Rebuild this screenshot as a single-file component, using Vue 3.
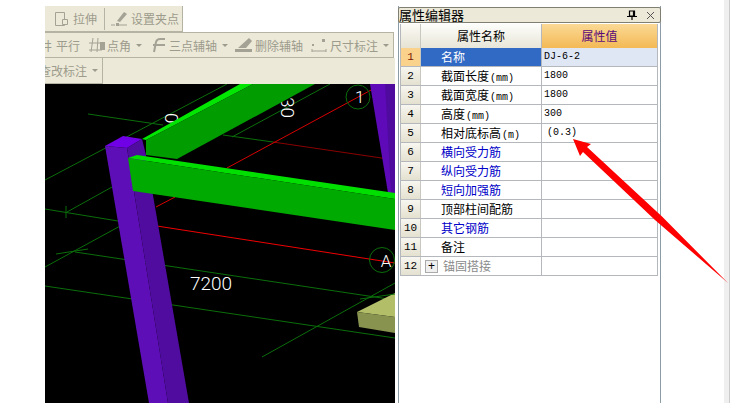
<template>
  <div class="page">
    <div class="work">
      <div class="bars">
        <div class="bar bar1">
          <div class="tool t-stretch">
            <svg width="16" height="16" viewBox="0 0 16 16"><path d="M1.5 1.5h9v13h-9z" fill="none" stroke="#a3a294"/><path d="M8.5 8.5h5v5h-5z" fill="#ece9d8" stroke="#a3a294"/></svg>
            <span>拉伸</span>
          </div>
          <div class="tool sep">
            <svg width="18" height="16" viewBox="0 0 18 16"><path d="M7 10l7-9 3 2-7 8z" fill="#a3a294"/><path d="M1 14h4M8 14h9" stroke="#a3a294"/><path d="M6 12h3v3H6z" fill="#a3a294"/></svg>
            <span>设置夹点</span>
          </div>
        </div>
        <div class="bar bar2">
          <div class="cut"><span>井</span></div>
          <span class="t-par">平行</span>
          <div class="tool g1">
            <svg width="19" height="16" viewBox="0 0 19 16"><path d="M5 1L3 15M10 1L9 15M1 6h13M1 13h13" stroke="#a3a294" fill="none"/><path d="M12 5h5v8h-5z" fill="#a3a294"/></svg>
            <span>点角</span><i class="caret"></i>
          </div>
          <div class="tool g2">
            <svg width="16" height="16" viewBox="0 0 16 16"><path d="M4 15l2-10q1-3 4-3h5M3 8h12" stroke="#a3a294" stroke-width="2" fill="none"/></svg>
            <span>三点辅轴</span><i class="caret"></i>
          </div>
          <div class="tool g3">
            <svg width="18" height="16" viewBox="0 0 18 16"><path d="M3 11l11-10 3 3-6 7z" fill="#a3a294"/><path d="M0 12h17v3H0z" fill="#a3a294"/></svg>
            <span>删除辅轴</span>
          </div>
          <div class="tool g4">
            <svg width="16" height="16" viewBox="0 0 16 16"><path d="M1 12v3M15 12v3M1 14h14" stroke="#a3a294" fill="none"/><path d="M1 7h2v2H1zM11 2h3v3h-3z" fill="#a3a294"/></svg>
            <span>尺寸标注</span><i class="caret"></i>
          </div>
        </div>
        <div class="bar3-wrap">
          <div class="bar bar3">
            <span class="cut3">查改标注</span><i class="caret"></i>
          </div>
        </div>
      </div>
      <div class="canvas">
        <svg width="350" height="319" viewBox="45 84 350 319">
          <rect x="45" y="84" width="350" height="319" fill="#000" />
          <g stroke-width="1" fill="none">
            <line v-for="(l, i) in greens" :key="i" :x1="l[0]" :y1="l[1]" :x2="l[2]" :y2="l[3]" stroke="#0b6e0b" />
            <line x1="273" y1="142" x2="395" y2="160" stroke="#8a0000" />
            <line x1="373" y1="89" x2="227" y2="168" stroke="#d80000" />
            <line x1="175" y1="197" x2="156" y2="207" stroke="#d80000" />
            <line x1="144" y1="224" x2="395" y2="263" stroke="#f00000" />
            <circle cx="358" cy="97" r="12" stroke="#0b6e0b" />
            <circle cx="382" cy="260" r="12.5" stroke="#0b6e0b" />
          </g>
          <text x="355" y="103" class="cad small">1</text>
          <text x="386" y="267" class="cad small" text-anchor="middle">A</text>
          <text x="190" y="290" class="cad big">7200</text>
          <text transform="translate(281 97) rotate(90)" class="cad big">30</text>
          <text transform="translate(165 113) rotate(90)" class="cad big">0</text>

          <polygon points="370,84 395,84 395,193 388,193" fill="#5f0ab8" />
          <polygon points="385,84 395,84 395,193 391,193" fill="#4f0a9e" />

          <polygon points="105,146 123,136 142,139 127,148" fill="#7000e6" />
          <polygon points="105,146 127,148 168,403 149,403" fill="#5e0eb6" />
          <polygon points="127,148 142,139 146,155 189,403 168,403" fill="#500c9f" />

          <polygon points="142,139 240,84 253,84 146,140" fill="#00e600" />
          <polygon points="146,140 253,84 315,84 177,159 146,155" fill="#009c00" />

          <polygon points="128,158 137,155 395,193 395,199" fill="#00e000" />
          <polygon points="128,158 395,199 395,230 133,191" fill="#00aa00" />

          <polygon points="357,312 395,293 395,317" fill="#b2be68" />
          <polygon points="357,312 395,317 395,333 359,327" fill="#88934f" />
          <line x1="360" y1="299" x2="395" y2="294" stroke="#0b6e0b" />
        </svg>
      </div>
    </div>

    <div class="panel">
      <div class="title">
        <span class="title-text">属性编辑器</span>
        <svg width="10" height="10" viewBox="0 0 10 10" class="pin"><path d="M2.5 1h5v5h-5zM0 6.5h10M5 6.5V10M6.5 1v5" fill="none" stroke="#000" stroke-width="1.2"/></svg>
        <svg width="9" height="9" viewBox="0 0 9 9" class="close"><path d="M1 1l7 7M8 1l-7 7" stroke="#555" fill="none"/></svg>
      </div>
      <div class="grid">
        <div class="row head">
          <div class="no"></div>
          <div class="name">属性名称</div>
          <div class="val">属性值</div>
        </div>
        <div v-for="r in rows" :key="r.no" class="row" :class="{ on: r.no === 1 }">
          <div class="no">{{ r.no }}</div>
          <div class="name" :class="{ blue: r.blue, gray: r.plus }">
            <span v-if="r.plus" class="plus">+</span>
            <span>{{ r.name }}</span><span v-if="r.unit" class="unit">{{ r.unit }}</span>
          </div>
          <div class="val" :class="{ shift: r.no === 5 }">{{ r.value }}</div>
        </div>
      </div>
    </div>

    <div class="strip"></div>

    <svg class="arrow" width="754" height="403" viewBox="0 0 754 403">
      <polygon points="573,139 591,144 587,147 662,216.5 728,283 655,220 583,152 580,156" fill="#ff0000" />
    </svg>
  </div>
</template>

<script setup>
const greens = [
  [45, 180, 227, 84],
  [88, 114, 163, 125],
  [223, 135, 273, 142],
  [232, 137, 330, 84],
  [45, 209, 118, 221],
  [66, 206, 66, 218],
  [67, 212, 112, 187],
  [45, 267, 122, 225],
  [56, 254, 88, 249],
  [75, 252, 395, 300],
  [45, 286, 395, 338],
  [262, 357, 395, 283],
]

const rows = [
  { no: 1, name: '名称', value: 'DJ-6-2' },
  { no: 2, name: '截面长度', unit: '(mm)', value: '1800' },
  { no: 3, name: '截面宽度', unit: '(mm)', value: '1800' },
  { no: 4, name: '高度', unit: '(mm)', value: '300' },
  { no: 5, name: '相对底标高', unit: '(m)', value: '(0.3)' },
  { no: 6, name: '横向受力筋', blue: true },
  { no: 7, name: '纵向受力筋', blue: true },
  { no: 8, name: '短向加强筋', blue: true },
  { no: 9, name: '顶部柱间配筋' },
  { no: 10, name: '其它钢筋', blue: true },
  { no: 11, name: '备注' },
  { no: 12, name: '锚固搭接', plus: true },
]
</script>

<style>
html,
body {
  margin: 0;
  background: #fff;
  overflow: hidden;
}
</style>

<style scoped>
.page {
  position: relative;
  width: 754px;
  height: 403px;
  display: flex;
  padding: 6px 0 0 45px;
  box-sizing: border-box;
  overflow: hidden;
  font-family: "Noto Sans CJK SC", sans-serif;
  font-size: 12px;
}
.work {
  width: 350px;
  flex: none;
}
.bars {
  height: 78px;
  color: #9c9b8c;
  overflow: hidden;
  white-space: nowrap;
}
.bar {
  display: flex;
  align-items: center;
  background: #ece9d8;
  box-sizing: border-box;
  border-right: 1px solid #b5b3a3;
  border-bottom: 1px solid #b5b3a3;
}
.bar1 {
  width: 138px;
  height: 26px;
  padding-left: 9px;
}
.bar2 {
  width: 349px;
  height: 26px;
  border-top: 1px solid #b5b3a3;
}
.bar3-wrap {
  background: #ece9d8;
  height: 26px;
}
.bar3 {
  width: 58px;
  height: 26px;
  overflow: hidden;
}
.tool {
  display: flex;
  align-items: center;
  flex: none;
  gap: 3px;
}
.sep {
  margin-left: 7px;
  height: 22px;
  padding-left: 5px;
  border-left: 1px solid #b5b3a3;
}
.cut {
  width: 7px;
  flex: none;
  overflow: hidden;
}
.cut span {
  display: block;
  margin-left: -5px;
}
.t-par {
  flex: none;
  margin-left: 4px;
}
.g1 {
  margin-left: 8px;
  gap: 0;
}
.g2 {
  margin-left: 8px;
}
.g3 {
  margin-left: 7px;
  gap: 2px;
}
.g4 {
  margin-left: 8px;
}
.cut3 {
  flex: none;
  margin-left: -6px;
}
.caret {
  width: 0;
  height: 0;
  margin-left: 5px;
  border: 3px solid transparent;
  border-top-color: #9c9b8c;
  border-bottom-width: 0;
}
.g2 .caret,
.g4 .caret {
  margin-left: 2px;
}
.canvas {
  height: 319px;
}
.canvas svg {
  display: block;
}
.cad {
  fill: #fff;
  font-family: Roboto, "Liberation Sans", sans-serif;
  font-weight: 300;
}
.small {
  font-size: 17px;
}
.big {
  font-size: 19px;
}
.panel {
  width: 263px;
  margin-left: 3px;
  height: 500px;
  flex: none;
  box-sizing: border-box;
  border-right: 1px solid #8b9ca6;
  border-left: 1px solid #8b9ca6;
}
.title {
  display: flex;
  align-items: center;
  height: 16px;
  margin: 1px -1px 0 -1px;
  box-sizing: border-box;
  background: #ece9d8;
  border: 1px solid #7f7f72;
  border-radius: 2px;
}
.title-text {
  font-size: 13px;
  line-height: 14px;
  color: #000;
  flex: 1;
}
.pin {
  margin-right: 9px;
}
.close {
  margin-right: 5px;
}
.grid {
  margin: 1px 0 0 1px;
  width: 258px;
  box-sizing: border-box;
  border-right: 1px solid #b4b8bc;
  border-left: 1px solid #b4b8bc;
}
.row {
  display: flex;
  height: 19px;
  box-sizing: border-box;
  border-bottom: 1px solid #b4b8bc;
  line-height: 18px;
  color: #000;
}
.row.head {
  height: 24px;
  line-height: 23px;
  border-bottom: none;
}
.no {
  width: 20px;
  flex: none;
  text-align: center;
  font-family: "Liberation Mono", monospace;
  font-size: 11px;
  background: linear-gradient(#f7f6f0, #e4e1d0);
  border-right: 1px solid #c8c8c0;
  box-sizing: border-box;
}
.name {
  width: 121px;
  flex: none;
  padding-left: 20px;
  box-sizing: border-box;
  border-right: 1px solid #b4b8bc;
  white-space: nowrap;
}
.val {
  flex: 1;
  padding-left: 2px;
  font-family: "Liberation Mono", monospace;
  font-size: 10px;
}
.head .no {
  background: linear-gradient(#fbfaf5, #e6e3d3);
}
.head .name {
  padding: 0;
  text-align: center;
  background: linear-gradient(#fdfdfb, #e8e6d8);
}
.head .val {
  padding: 0;
  text-align: center;
  font-family: "Noto Sans CJK SC", sans-serif;
  font-size: 12px;
  color: #5a0a78;
  background: linear-gradient(#fbd995, #f3b955);
}
.on .no {
  color: #7a1a00;
  background: #fbd28c;
}
.on .name {
  color: #fff;
  background: #316ac5;
}
.on .val {
  background: #dfe7f5;
}
.blue {
  color: #0000c8;
}
.gray {
  color: #8a8a8a;
  padding-left: 3px;
}
.unit {
  font-family: "Liberation Mono", monospace;
  font-size: 10px;
  margin-left: 1px;
}
.shift {
  padding-left: 5px;
}
.plus {
  display: inline-block;
  width: 11px;
  height: 11px;
  line-height: 10px;
  margin: 0 5px 0 1px;
  text-align: center;
  color: #000;
  font-family: "Liberation Sans", sans-serif;
  font-size: 12px;
  background: #efefef;
  border: 1px solid #aaa;
  vertical-align: 1px;
}
.strip {
  position: absolute;
  left: 724px;
  top: 0;
  width: 6px;
  height: 403px;
  box-sizing: border-box;
  background: #efefef;
  border-right: 1px solid #ccc;
}
.arrow {
  position: absolute;
  left: 0;
  top: 0;
  pointer-events: none;
}
</style>
